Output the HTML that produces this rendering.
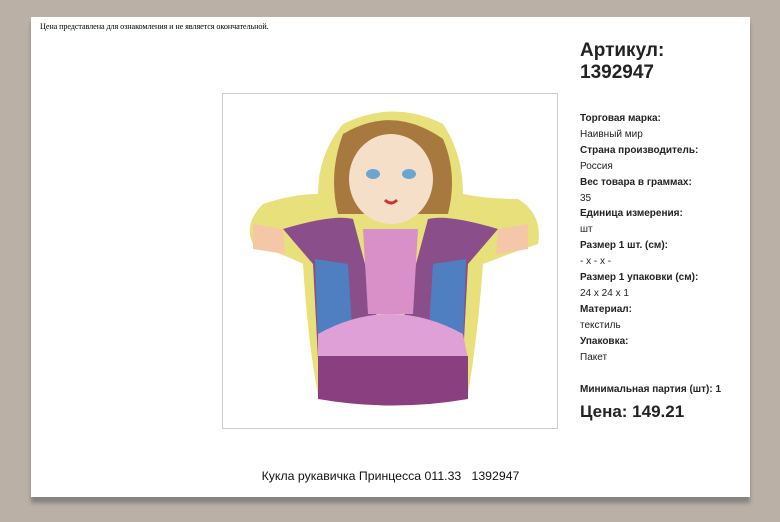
<!DOCTYPE html>
<html><head><meta charset="utf-8"><style>
body{margin:0;width:780px;height:522px;background:#bbb0a5;position:relative;overflow:hidden;font-family:"Liberation Sans",Arial,sans-serif;color:#222}
.card{position:absolute;left:31px;top:17px;width:719px;height:480px;background:#fff;box-shadow:0 6px 4px #858280}
.note{position:absolute;left:9px;top:5px;font:8.2px "Liberation Serif",serif;color:#000;letter-spacing:-0.1px}
.img{position:absolute;left:191px;top:76px;width:334px;height:334px;border:1px solid #ccc;background:#fff;overflow:hidden}
.info{position:absolute;left:549px;top:23px;width:170px}
.art{font-size:19px;font-weight:bold;line-height:22px;color:#222}
.list{margin-top:27px;font-size:10px;line-height:15.9px}
.list b{display:block}
.min{margin-top:18px;font-size:10px;font-weight:bold}
.price{font-size:17px;font-weight:bold;margin-top:7px}
.title{position:absolute;left:0;width:719px;top:452px;text-align:center;font-size:12.3px;color:#111}
</style></head><body>
<div class="card">
<div class="note">Цена представлена для ознакомления и не является окончательной.</div>
<div class="img"><svg width="334" height="334" viewBox="0 0 334 334">
<path d="M40 110 Q20 130 30 150 Q60 160 80 170 Q85 250 95 300 Q170 318 245 300 Q255 240 260 170 Q285 160 315 150 Q320 120 295 105 Q265 105 240 100 Q240 60 220 30 Q170 5 120 30 Q95 60 95 100 Q70 100 40 110Z" fill="#e8e07a"/>
<path d="M120 40 Q170 10 220 45 Q235 80 225 120 L115 120 Q105 80 120 40Z" fill="#a8793f"/>
<ellipse cx="168" cy="85" rx="42" ry="45" fill="#f6dfc8"/>
<ellipse cx="150" cy="80" rx="7" ry="5" fill="#6aa6d0"/><ellipse cx="186" cy="80" rx="7" ry="5" fill="#6aa6d0"/>
<path d="M162 106 Q168 112 174 106" stroke="#c33" stroke-width="3" fill="none"/>
<path d="M60 135 Q110 120 130 125 L150 200 L160 260 L95 265 L90 170 Z" fill="#8a4f8a"/>
<path d="M275 135 Q225 120 205 125 L185 200 L175 260 L240 265 L245 170 Z" fill="#8a4f8a"/>
<path d="M92 165 L125 170 L130 250 L95 250Z" fill="#4f7fc0"/>
<path d="M243 165 L210 170 L205 250 L240 250Z" fill="#4f7fc0"/>
<path d="M140 135 L195 135 L190 220 L145 220Z" fill="#d98fc7"/>
<path d="M30 130 L60 135 L62 160 L30 155Z" fill="#f4c7a8"/><path d="M305 130 L275 135 L273 160 L305 155Z" fill="#f4c7a8"/>
<path d="M95 240 Q167 200 240 240 L245 265 L95 265Z" fill="#dea0d6"/>
<path d="M95 262 L245 262 L245 305 Q170 318 95 305Z" fill="#8a3f80"/>
</svg></div>
<div class="info">
<div class="art">Артикул:<br>1392947</div>
<div class="list"><b>Торговая марка:</b>Наивный мир<b>Страна производитель:</b>Россия<b>Вес товара в граммах:</b>35<b>Единица измерения:</b>шт<b>Размер 1 шт. (см):</b>- x - x -<b>Размер 1 упаковки (см):</b>24 x 24 x 1<b>Материал:</b>текстиль<b>Упаковка:</b>Пакет</div>
<div class="min">Минимальная партия (шт): 1</div>
<div class="price">Цена: 149.21</div>
</div>
<div class="title">Кукла рукавичка Принцесса 011.33 &nbsp; 1392947</div>
</div>
</body></html>
